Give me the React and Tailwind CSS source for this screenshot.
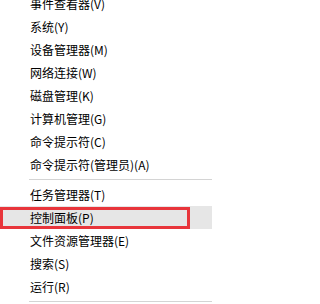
import React from "react";

const groupA = [
  "事件查看器(V)",
  "系统(Y)",
  "设备管理器(M)",
  "网络连接(W)",
  "磁盘管理(K)",
  "计算机管理(G)",
  "命令提示符(C)",
  "命令提示符(管理员)(A)",
];

const groupB = [
  "任务管理器(T)",
  "控制面板(P)",
  "文件资源管理器(E)",
  "搜索(S)",
  "运行(R)",
];

function Row({ label, active }) {
  return (
    <div
      className={
        "relative h-[23px] flex items-center pl-[30px] " +
        (active ? "bg-[#e6e6e6]" : "")
      }
    >
      <span className="text-[12px] leading-none text-black">{label}</span>
      {active && (
        <div className="absolute left-0 top-[1px] h-[22px] w-[190px] border-[3px] border-[#e8353b]" />
      )}
    </div>
  );
}

function Sep() {
  return (
    <div className="h-[7px] flex items-center pl-[29px]">
      <div className="h-px w-full bg-[#d4d4d4]" />
    </div>
  );
}

export default function App() {
  return (
    <div
      className="w-[212px] h-[304px] overflow-hidden bg-white"
      style={{ fontFamily: '"Noto Sans CJK SC", "Noto Sans", sans-serif' }}
    >
      <div className="mt-[-8px] flex flex-col">
        {groupA.map((l) => (
          <Row key={l} label={l} />
        ))}
        <Sep />
        {groupB.map((l) => (
          <Row key={l} label={l} active={l === "控制面板(P)"} />
        ))}
        <Sep />
      </div>
    </div>
  );
}
